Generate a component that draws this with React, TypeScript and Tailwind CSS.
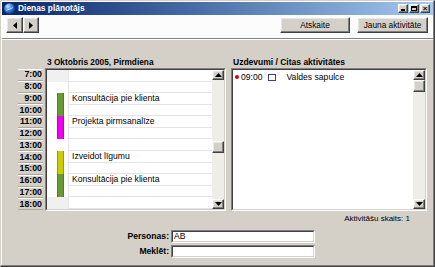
import React from 'react';

const raised =
  'border border-t-white border-l-white border-r-[#404040] border-b-[#404040] shadow-[inset_-1px_-1px_0_#808080,inset_1px_1px_0_#e8e6e0] bg-[#d4d0c8]';

const rows = [
  { t: '7:00', bar: '', label: '' },
  { t: '8:00', bar: '', label: '' },
  { t: '9:00', bar: 'green', label: 'Konsultācija pie klienta' },
  { t: '10:00', bar: 'green', label: '' },
  { t: '11:00', bar: 'magenta', label: 'Projekta pirmsanalīze' },
  { t: '12:00', bar: 'magenta', label: '' },
  { t: '13:00', bar: '', label: '' },
  { t: '14:00', bar: 'yellow', label: 'Izveidot līgumu' },
  { t: '15:00', bar: 'yellow', label: '' },
  { t: '16:00', bar: 'green', label: 'Konsultācija pie klienta' },
  { t: '17:00', bar: 'green', label: '' },
  { t: '18:00', bar: '', label: '' },
];

const barClass: Record<string, string> = {
  green: 'bg-[#679a33] border-l border-r border-[#4f7d24]',
  magenta: 'bg-[#f000f0] border-l border-r border-[#c000c0]',
  yellow: 'bg-[#cccc00] border-l border-r border-[#9a9a00]',
};

function Arrow({ dir }: { dir: 'up' | 'down' | 'left' | 'right' }) {
  const pts = {
    up: '0,4 3.5,0 7,4',
    down: '0,0 3.5,4 7,0',
    left: '4,0 0,3.5 4,7',
    right: '0,0 4,3.5 0,7',
  }[dir];
  const vertical = dir === 'up' || dir === 'down';
  return (
    <svg width={vertical ? 7 : 4} height={vertical ? 4 : 7} viewBox={vertical ? '0 0 7 4' : '0 0 4 7'}>
      <polygon points={pts} fill="#000" />
    </svg>
  );
}

function Scrollbar({ thumbOffset }: { thumbOffset: number }) {
  return (
    <div className="flex h-full w-[12px] shrink-0 flex-col bg-[#efede8]">
      <div className={`${raised} flex h-[10px] items-center justify-center`}>
        <Arrow dir="up" />
      </div>
      <div style={{ height: thumbOffset }} />
      <div className={`${raised} h-[12px]`} />
      <div className="flex-1" />
      <div className={`${raised} flex h-[10px] items-center justify-center`}>
        <Arrow dir="down" />
      </div>
    </div>
  );
}

function Sunken({ className, children }: { className?: string; children: React.ReactNode }) {
  return (
    <div className={`border border-t-[#808080] border-l-[#808080] border-r-white border-b-white ${className ?? ''}`}>
      <div className="flex h-full border border-t-[#404040] border-l-[#404040] border-r-[#d4d0c8] border-b-[#d4d0c8] bg-white">
        {children}
      </div>
    </div>
  );
}

function TitleIcon() {
  return (
    <svg width="11" height="11" viewBox="0 0 11 11">
      <defs>
        <radialGradient id="g" cx="35%" cy="30%" r="75%">
          <stop offset="0" stopColor="#cfe6ff" />
          <stop offset="0.45" stopColor="#3d8fe0" />
          <stop offset="1" stopColor="#0b3f9a" />
        </radialGradient>
      </defs>
      <circle cx="5.5" cy="5.5" r="5.3" fill="url(#g)" />
      <path d="M2.2 7.5 C4 6.2 6.5 6.6 8.8 4.4" stroke="#ffffff" strokeOpacity="0.7" strokeWidth="1" fill="none" />
    </svg>
  );
}

export default function App() {
  return (
    <div className="flex h-[267px] w-[435px] flex-col overflow-hidden border border-t-[#d4d0c8] border-l-[#d4d0c8] border-r-[#404040] border-b-[#404040] bg-[#d4d0c8] p-[1px] font-['Liberation_Sans',Arial,sans-serif] text-black shadow-[inset_-1px_-1px_0_#808080,inset_1px_1px_0_#ffffff]">
      {/* title bar */}
      <div className="flex h-[13px] shrink-0 items-center bg-linear-to-r from-[#0a246a] to-[#a6caf0] pl-[2px] pr-[3px]">
        <TitleIcon />
        <span className="ml-[3px] text-[8.4px] font-bold leading-none text-white">Dienas plānotājs</span>
        <div className="ml-auto flex items-center">
          <div className={`${raised} flex h-[9px] w-[10px] items-end justify-center pb-[1px]`}>
            <div className="h-[2px] w-[4px] bg-black" />
          </div>
          <div className={`${raised} ml-[1px] flex h-[9px] w-[10px] items-center justify-center`}>
            <div className="h-[5px] w-[6px] border border-t-2 border-black" />
          </div>
          <div className={`${raised} ml-[1px] flex h-[9px] w-[10px] items-center justify-center text-[8px] font-bold leading-none`}>
            ×
          </div>
        </div>
      </div>

      {/* toolbar */}
      <div className="flex h-[24px] shrink-0 items-start border-b border-b-[#808080] bg-[#fcfcfc] pt-[2px] pl-[4px] pr-[5px] shadow-[0_1px_0_#ffffff]">
        <div className="flex">
          <div className={`${raised} flex h-[16px] w-[17px] items-center justify-center`}>
            <Arrow dir="left" />
          </div>
          <div className={`${raised} flex h-[16px] w-[16px] items-center justify-center`}>
            <Arrow dir="right" />
          </div>
        </div>
        <div className="ml-auto flex gap-[7px]">
          <div className={`${raised} flex h-[16px] w-[70px] items-center justify-center text-[8.3px] leading-none`}>
            Atskaite
          </div>
          <div className={`${raised} flex h-[16px] w-[71px] items-center justify-center text-[8.3px] leading-none`}>
            Jauna aktivitāte
          </div>
        </div>
      </div>

      {/* body */}
      <div className="flex flex-1 flex-col pt-[18px]">
        <div className="flex pl-[16px]">
          {/* day column */}
          <div className="flex flex-col">
            <div className="h-[11px] pl-[29px] text-[8.3px] font-bold leading-[10px]">3 Oktobris 2005, Pirmdiena</div>
            <div className="flex h-[143px] gap-[2px]">
              <div className="flex w-[25px] flex-col py-[1px]">
                {rows.map((r) => (
                  <div
                    key={r.t}
                    className="flex flex-1 items-center justify-end border-t border-b border-t-white border-b-[#aca899] pr-[1px] text-[8.8px] font-bold leading-none"
                  >
                    {r.t}
                  </div>
                ))}
              </div>
              <Sunken className="w-[181px]">
                <div className="flex flex-1 flex-col">
                  {rows.map((r, i) => (
                    <div key={r.t} className="flex flex-1">
                      <div
                        className={`flex w-[22px] shrink-0 justify-start border-r border-r-[#e4e4e4] pl-[10px] ${
                          i === 0 || i === rows.length - 1 ? 'bg-[#f0f0f0]' : 'bg-white'
                        }`}
                      >
                        {r.bar && <div className={`h-full w-[7px] ${barClass[r.bar]}`} />}
                      </div>
                      <div className="flex flex-1 items-center border-b border-b-[#e4e4e4] pl-[3px] text-[8.6px] leading-none">
                        {r.label}
                      </div>
                    </div>
                  ))}
                </div>
                <Scrollbar thumbOffset={61} />
              </Sunken>
            </div>
          </div>

          {/* tasks column */}
          <div className="ml-[5px] flex w-[196px] flex-col">
            <div className="h-[11px] pl-[2px] text-[8.5px] font-bold leading-[10px]">Uzdevumi / Citas aktivitātes</div>
            <Sunken className="h-[143px]">
              <div className="flex flex-1 flex-col">
                <div className="flex h-[12px] items-center pt-[2px] pl-[2px] text-[8.6px] leading-none">
                  <div className="h-[4px] w-[4px] rounded-full bg-[#d00000]" />
                  <span className="ml-[2px]">09:00</span>
                  <div className="ml-[5px] h-[7px] w-[8px] border border-[#3b3b8f] bg-white" />
                  <span className="ml-[11px]">Valdes sapulce</span>
                </div>
              </div>
              <Scrollbar thumbOffset={0} />
            </Sunken>
            <div className="mt-[3px] h-[10px] pr-[17px] text-right text-[8px] leading-[10px]">Aktivitāšu skaits: 1</div>
          </div>
        </div>

        {/* filters */}
        <div className="mt-[6px] flex flex-col gap-[2px]">
          <div className="flex items-center">
            <div className="w-[167px] text-right text-[8.6px] font-bold leading-none">Personas:</div>
            <Sunken className="ml-[2px] h-[13px] w-[144px]">
              <div className="flex items-center pl-[1px] text-[8.6px] leading-none">AB</div>
            </Sunken>
          </div>
          <div className="flex items-center">
            <div className="w-[167px] text-right text-[8.6px] font-bold leading-none">Meklēt:</div>
            <Sunken className="ml-[2px] h-[13px] w-[144px]">
              <div />
            </Sunken>
          </div>
        </div>
      </div>
    </div>
  );
}
